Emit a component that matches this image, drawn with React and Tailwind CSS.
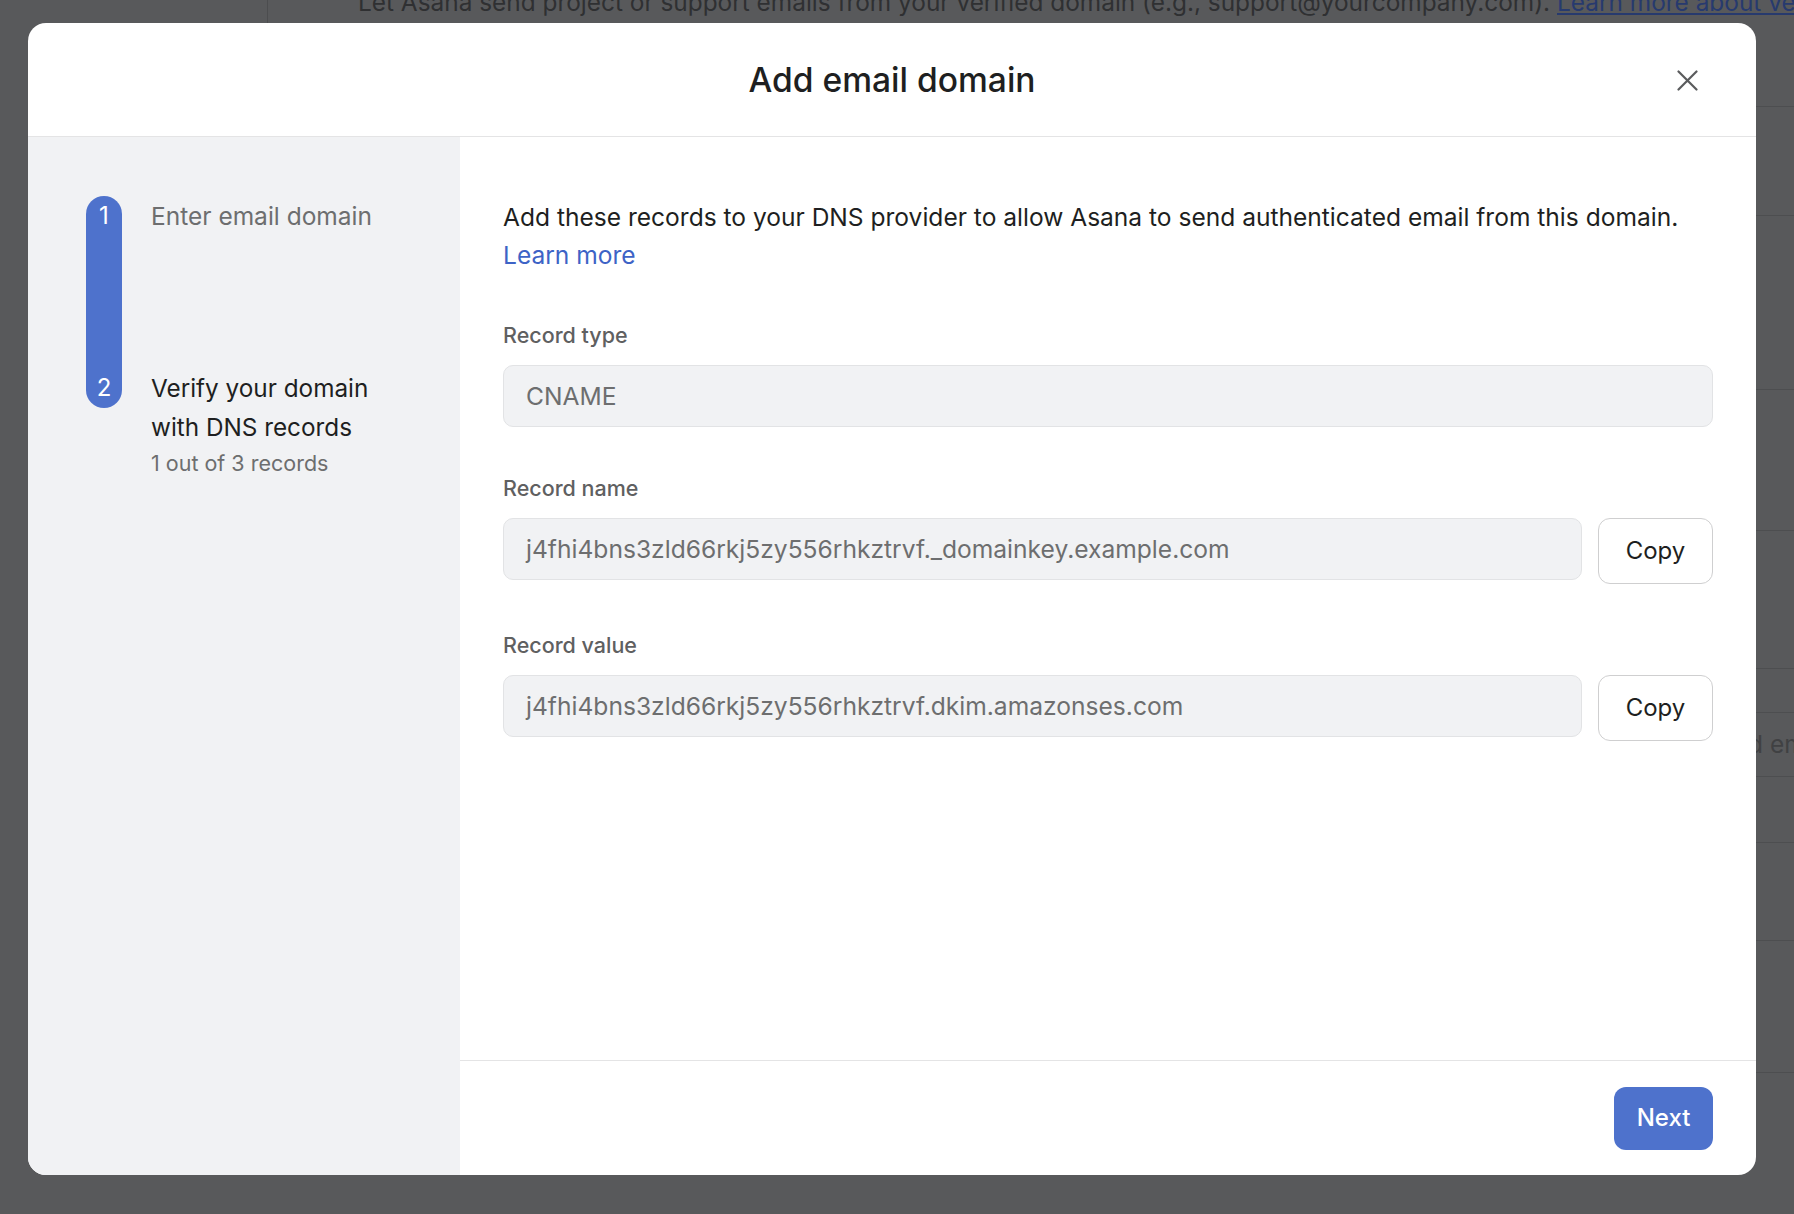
import React from "react";

const font = { fontFamily: "Inter, 'Noto Sans', 'Liberation Sans', sans-serif" };

function Backdrop() {
  const lines = [106, 215, 389, 530, 668, 712, 776, 842, 940, 1072];
  return (
    <div className="absolute inset-0 bg-[#58595b]">
      <div className="absolute left-[267px] top-0 h-[23px] w-px bg-[#4c4d4f]" />
      <div className="absolute left-[358px] top-[-13px] whitespace-nowrap text-[24.4px] leading-[30px] text-[#2f3032]">
        Let Asana send project or support emails from your verified domain (e.g., support@yourcompany.com).{" "}
        <span className="text-[#273a6e] underline">Learn more about verified domains</span>
      </div>
      {lines.map((y) => (
        <div key={y} className="absolute left-[1740px] right-0 h-px bg-[#4d4e50]" style={{ top: y }} />
      ))}
      <div className="absolute left-[1748px] top-[729px] whitespace-nowrap text-[24.5px] leading-[30px] text-[#404143]">
        d email
      </div>
    </div>
  );
}

function Field({ label, value, copy }) {
  return (
    <div className="flex flex-col">
      <div className="text-[21.5px] leading-[30px] font-medium text-[#5f6061]">{label}</div>
      <div className="mt-[15px] flex items-start gap-4">
        <div className="flex h-[62px] flex-1 items-center rounded-[10px] border border-[#e2e3e5] bg-[#f1f2f4] pl-[22px] text-[24.6px] text-[#6d6e6f]">
          {value}
        </div>
        {copy && (
          <button className="flex h-[66px] w-[115px] items-center justify-center rounded-[12px] border border-[#cfcfd0] bg-white text-[24px] text-[#1e1f21]">
            Copy
          </button>
        )}
      </div>
    </div>
  );
}

export default function App() {
  return (
    <div className="relative h-[1214px] w-[1794px] overflow-hidden" style={font}>
      <Backdrop />
      <div className="relative pl-[28px] pt-[23px]">
        <div className="flex h-[1152px] w-[1728px] flex-col overflow-hidden rounded-[18px] bg-white">
          <div className="relative flex h-[114px] shrink-0 items-center justify-center border-b border-[#e4e4e5] pt-[2px]">
            <h1 className="text-[33.6px] font-medium text-[#1e1f21]">Add email domain</h1>
            <button className="absolute right-[58px] top-[47px] flex h-[21px] w-[21px] items-center justify-center">
              <svg width="21" height="21" viewBox="0 0 21 21" fill="none" stroke="#5a5b5d" strokeWidth="2.2" strokeLinecap="round">
                <path d="M1.5 1.5 L19.5 19.5 M19.5 1.5 L1.5 19.5" />
              </svg>
            </button>
          </div>
          <div className="flex flex-1">
            <div className="flex w-[432px] shrink-0 gap-[29px] bg-[#f1f2f4] pl-[58px] pt-[59px]">
              <div className="flex h-[212px] w-[36px] flex-col items-center justify-between rounded-full bg-[#4e72cc] text-[24px] leading-[40px] text-white">
                <span>1</span>
                <span>2</span>
              </div>
              <div className="flex flex-col">
                <div className="text-[24.5px] leading-[40px] text-[#6d6e6f]">Enter email domain</div>
                <div className="mt-[133px] text-[24.3px] leading-[39px] text-[#1e1f21]">
                  Verify your domain
                  <br />
                  with DNS records
                </div>
                <div className="text-[21.5px] leading-[33px] text-[#6d6e6f]">1 out of 3 records</div>
              </div>
            </div>
            <div className="flex flex-1 flex-col">
              <div className="flex flex-1 flex-col px-[43px] pt-[61px]">
                <p className="text-[24.55px] leading-[38px] text-[#1e1f21]">
                  Add these records to your DNS provider to allow Asana to send authenticated email from this domain.
                  <br />
                  <span className="text-[#3d63c6]">Learn more</span>
                </p>
                <div className="mt-[46px] flex flex-col gap-[46px]">
                  <Field label="Record type" value="CNAME" />
                  <Field label="Record name" value="j4fhi4bns3zld66rkj5zy556rhkztrvf._domainkey.example.com" copy />
                  <Field label="Record value" value="j4fhi4bns3zld66rkj5zy556rhkztrvf.dkim.amazonses.com" copy />
                </div>
              </div>
              <div className="flex h-[115px] shrink-0 items-center justify-end border-t border-[#e4e4e5] pr-[43px]">
                <button className="flex h-[63px] w-[99px] items-center justify-center rounded-[12px] bg-[#4e72cc] text-[24px] font-medium text-white">
                  Next
                </button>
              </div>
            </div>
          </div>
        </div>
      </div>
    </div>
  );
}
